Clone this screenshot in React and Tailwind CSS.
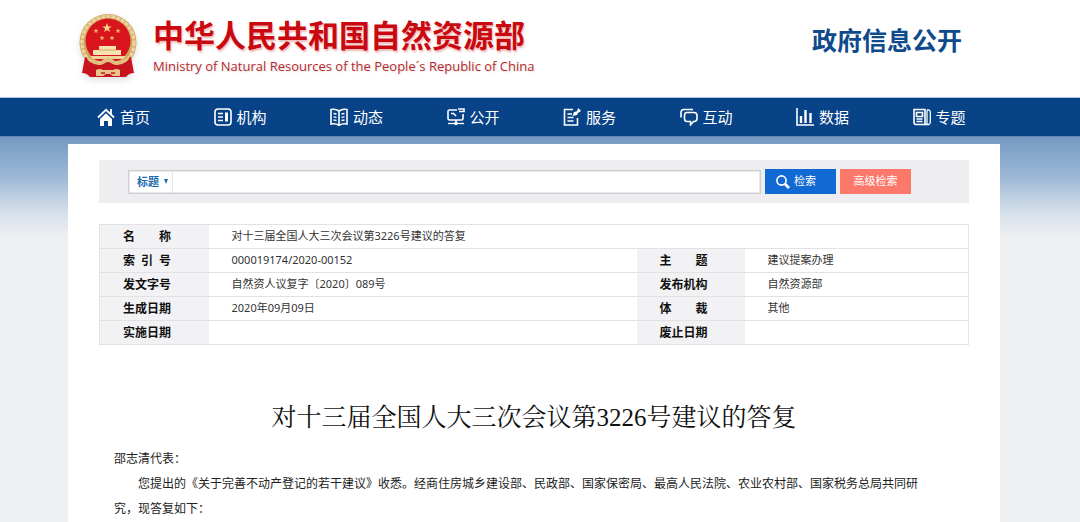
const NAV_ITEMS = [
  { key: 'home', label: '首页' },
  { key: 'org', label: '机构' },
  { key: 'news', label: '动态' },
  { key: 'open', label: '公开' },
  { key: 'service', label: '服务' },
  { key: 'interact', label: '互动' },
  { key: 'data', label: '数据' },
  { key: 'topic', label: '专题' },
]

const META_ROWS = [
  ['名\u3000\u3000称', '对十三届全国人大三次会议第3226号建议的答复'],
  ['索\u2002引\u2002号', '000019174/2020-00152', '主\u3000\u3000题', '建议提案办理'],
  ['发文字号', '自然资人议复字〔2020〕089号', '发布机构', '自然资源部'],
  ['生成日期', '2020年09月09日', '体\u3000\u3000裁', '其他'],
  ['实施日期', '', '废止日期', ''],
]

const NAV_ICONS = {
  home: (
    <>
      <path d="M1 9.500 9 1.800l8 7.700M14 1v5" strokeWidth="1.800" />
      <path d="M3 11 9 5.300l6 5.700v7h-4v-5H7v5H3z" fill="currentColor" stroke="none" />
    </>
  ),
  org: (
    <>
      <rect x="1" y="1" width="16" height="16" rx="3" />
      <path d="M4 5.500h5M4 9h5M4 12.500h5" />
      <path d="M11 4.500h3v9h-3z" fill="currentColor" stroke="none" />
    </>
  ),
  news: (
    <>
      <path d="M9 3C7 1.500 4 1 1 1.500V16c3-.5 6 0 8 1.300C11 16 14 15.500 17 16V1.500C14 1 11 1.500 9 3zM9 3v14" />
      <path d="M3.500 5.500 6.500 6M3.500 8.800l3 .5M3.500 12l3 .5M14.500 5.500l-3 .5M14.500 8.800l-3 .5M14.500 12l-3 .5" strokeWidth="1.300" />
    </>
  ),
  open: (
    <>
      <path d="M10 2H2.500Q1 2 1 3.500v7Q1 12 2.500 12h12q1.500 0 1.500-1.500V6M9 12v3" />
      <path d="M4 5.500h2.500L9 8M11 1h6v2.500h-5" />
      <path d="M1 15.500h16" strokeWidth="1.300" />
      <circle cx="9" cy="15.500" r="1.800" fill="currentColor" stroke="none" />
    </>
  ),
  service: (
    <>
      <path d="M10 1.500H1.500v15.500h13V10" />
      <path d="M4.500 6H9M4.500 9.500h6M4.500 13h6" />
      <path d="m9.500 8 1.500-4 2.500-.5L15.500 0 18 3l-3 2-1 2z" fill="currentColor" stroke="none" />
    </>
  ),
  interact: (
    <>
      <path d="M1 9.500V4.500Q1 1.500 4 1.500h9" />
      <path d="M7 4.500h7q3 0 3 3v3q0 3-3 3h-.5L10.500 17v-3.500H7q-2.500 0-2.500-3v-3q0-3 2.500-3z" />
    </>
  ),
  data: (
    <>
      <path d="M1 0v17h17" />
      <path d="M5 8v7M9.500 2v13M14.500 5v10" strokeWidth="2.400" />
    </>
  ),
  topic: (
    <>
      <path d="M1 1.500h11v15H3q-2 0-2-2z" />
      <path d="M3.500 4.500h6v4h-6zM3.500 11h6M3.500 13.500h6" />
      <path d="M14 2.500v14M14 2h2q1.300.5 1.300 2v10q0 2-1.500 2.500H12" strokeWidth="1.300" />
    </>
  ),
}

function NavIcon({ name }) {
  return (
    <svg viewBox="0 0 18 18" className="size-[18px] shrink-0" fill="none" stroke="currentColor" strokeWidth="1.600" aria-hidden="true">
      {NAV_ICONS[name]}
    </svg>
  )
}

const STAR = 'M0-5 1.200-1.600 4.800-1.500 1.900.6 2.900 4 0 2-2.900 4-1.900.6-4.800-1.500-1.200-1.600z'

function Emblem() {
  return (
    <svg viewBox="0 0 60 66" className="h-[66px] w-[60px] shrink-0 drop-shadow-md" aria-hidden="true">
      <circle cx="30" cy="29.500" r="28.500" fill="#cfa45c" />
      <circle cx="30" cy="29.500" r="26" fill="none" stroke="#ecd3a0" strokeWidth="3.500" strokeDasharray="4 1" />
      <circle cx="30" cy="28" r="22.500" fill="#d8141c" />
      <path d={STAR} fill="#f3d68a" transform="translate(29 15)" />
      <g fill="#e9b766">
        <path d={STAR} transform="translate(18 18) scale(.55)" />
        <path d={STAR} transform="translate(40 18) scale(.55)" />
        <path d={STAR} transform="translate(24 25) scale(.55)" />
        <path d={STAR} transform="translate(34 25) scale(.55)" />
      </g>
      <path d="M21 33h17v4h5v5H15v-5h6z" fill="#f5e3b0" />
      <path d="M21 37h17" stroke="#d9a95c" />
      <path d="M12 43h36l-3 3H15z" fill="#eed49a" />
      <path d="M7 44q9 2 13 8l10-3 10 3q4-6 13-8l3 16q-5 0-8 4H12q-3-4-8-4z" fill="#c8141f" />
      <path d="M8 43q8 5 15 5 3-3 7-3t7 3q7 0 15-5-2 8-13 9-4 0-6-2-3-2-6 0-2 2-6 2-11-1-13-9z" fill="#e2bf7e" />
      <path d="M18 63v-6q4-2 7 0h10q3-2 7 0v6h-7l-3-2h-4l-3 2z" fill="#e8c48a" />
      <path d="M23 60h4M33 60h4" stroke="#c8141f" strokeWidth="1.500" />
    </svg>
  )
}

function SearchBar() {
  return (
    <form className="flex h-[43px] items-center bg-[#eeeef0] pl-[29px] pr-[58px]" onSubmit={(e) => e.preventDefault()}>
      <div className="flex h-6 min-w-0 flex-1 border border-[#cfcfd1] bg-white shadow-[inset_0_0_0_1px_#e8e8ea]">
        <div className="relative w-11 border-r border-[#e6e6e8]">
          <select
            aria-label="检索范围"
            className="block h-full w-full appearance-none pl-2 text-[11px] font-bold leading-4 text-[#1c6bb0] outline-none"
          >
            <option>标题</option>
          </select>
          <svg viewBox="0 0 4 5" className="pointer-events-none absolute right-1 top-2 h-[5px] w-1" aria-hidden="true">
            <path d="M0 0h4L2 5z" fill="#1c6bb0" />
          </svg>
        </div>
        <input type="text" aria-label="检索词" className="min-w-0 flex-1 px-2 text-[11px] outline-none" />
      </div>
      <button type="submit" className="ml-1 flex h-[25px] w-[71px] items-center gap-1 bg-[#1169d3] pl-[11px] text-[11px] text-white">
        <svg viewBox="0 0 14 14" className="size-[14px]" fill="none" stroke="currentColor" aria-hidden="true">
          <circle cx="5.500" cy="5.500" r="4.600" strokeWidth="1.600" />
          <path d="m9 9 4 4" strokeWidth="2.600" />
        </svg>
        检索
      </button>
      <button type="button" className="ml-1 h-[25px] w-[71px] bg-[#fc786a] text-[11px] text-white">
        高级检索
      </button>
    </form>
  )
}

function MetaTable() {
  return (
    <table className="mt-[21px] w-full table-fixed border-collapse text-left text-[11px] text-[#333]">
      <colgroup>
        <col className="w-[109px]" />
        <col />
        <col className="w-[108px]" />
        <col className="w-[224px]" />
      </colgroup>
      <tbody>
        {META_ROWS.map(([label, value, label2, value2]) => (
          <tr key={label} className="h-6 border border-[#e2e2e4]">
            <th scope="row" className="bg-[#f2f2f4] pl-[23px] text-xs font-bold text-[#111]">{label}</th>
            <td colSpan={label2 ? 1 : 3} className="pl-[23px]">{value}</td>
            {label2 && (
              <>
                <th scope="row" className="bg-[#f2f2f4] pl-[23px] text-xs font-bold text-[#111]">{label2}</th>
                <td className="pl-[23px]">{value2}</td>
              </>
            )}
          </tr>
        ))}
      </tbody>
    </table>
  )
}

export default function App() {
  return (
    <div className="min-h-screen bg-[#eff0f2] font-['Noto_Sans','Noto_Sans_CJK_SC',sans-serif]" lang="zh-CN">
      <header className="flex h-[98px] items-start justify-between border-b border-[#a9c6dd] bg-white pl-[78px] pr-[118px]">
        <a href="#" className="flex items-start pt-[13px]">
          <Emblem />
          <span className="ml-[15px] flex flex-col text-[#c9090f]">
            <span className="text-[31px] font-bold leading-[45px] [text-shadow:1px_2px_2px_#f0b8b8]">中华人民共和国自然资源部</span>
            <span className="font-['Open_Sans',sans-serif] text-[13px] leading-4 text-[#b8282c] [text-shadow:1px_1px_2px_#ddd]">
              Ministry of Natural Resources of the People´s Republic of China
            </span>
          </span>
        </a>
        <h2 className="pt-[22px] text-[25px] font-bold leading-9 text-[#0e4a8c]">政府信息公开</h2>
      </header>

      <nav className="flex h-[39px] border-b border-[#5f86b5] bg-[#084287] pl-[68px] pr-20">
        {NAV_ITEMS.map((item) => (
          <a key={item.key} href="#" className="flex flex-1 items-center gap-[5px] pl-[29px] text-[15px] text-white">
            <NavIcon name={item.key} />
            {item.label}
          </a>
        ))}
      </nav>

      <div className="bg-[linear-gradient(#7499c3,#9db8d5_40px,#d5e0ea_75px,#eff0f2_100px)] pl-[68px] pr-20 pt-[7px]">
        <main className="min-h-[378px] bg-white px-[31px] pt-4">
          <SearchBar />
          <MetaTable />
          <h1 className="mt-[55px] text-center font-['Liberation_Serif','Noto_Serif_CJK_SC','Noto_Sans_CJK_SC',serif] text-[25px] leading-9 text-[#111]">
            对十三届全国人大三次会议第3226号建议的答复
          </h1>
          <article className="mt-[10px] pl-[15px] pr-[42px] text-xs leading-[25px] text-[#222]">
            <p>邵志清代表：</p>
            <p className="indent-6">
              您提出的《关于完善不动产登记的若干建议》收悉。经商住房城乡建设部、民政部、国家保密局、最高人民法院、农业农村部、国家税务总局共同研究，现答复如下：
            </p>
          </article>
        </main>
      </div>
    </div>
  )
}
